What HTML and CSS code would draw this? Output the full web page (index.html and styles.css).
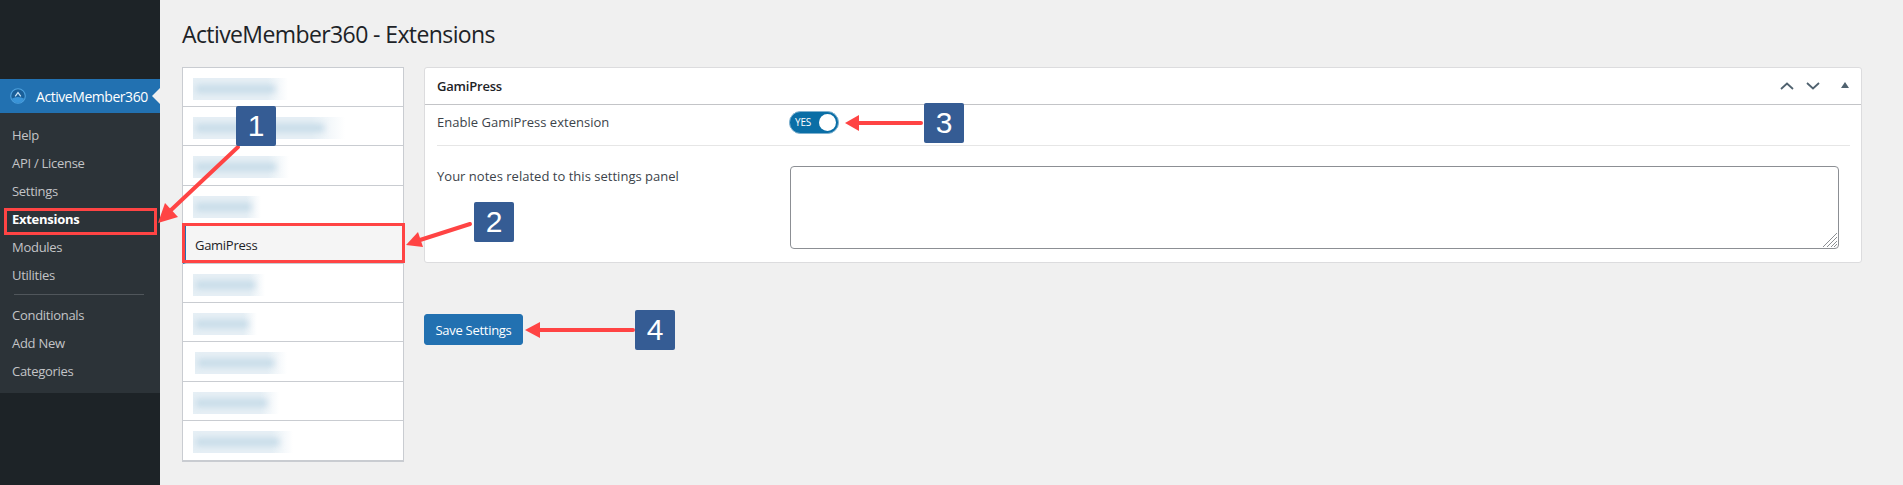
FILE: index.html
```html
<!DOCTYPE html>
<html lang="en">
<head>
<meta charset="utf-8">
<title>ActiveMember360 - Extensions</title>
<link rel="stylesheet" href="styles.css">
</head>
<body>
<div class="page">
  <aside class="sidebar">
    <div class="menu-head">
      <svg class="menu-icon" viewBox="0 0 16 16" aria-hidden="true">
        <circle cx="8" cy="8" r="7.3" fill="#1a5f99" stroke="#4fa3e0" stroke-width="1.1"/>
        <path d="M1.6 10.8 Q8 7 14.4 10.8 Q12 15 8 15 Q4 15 1.6 10.8Z" fill="#3a94d8"/>
        <path d="M5.2 8.4 L8 4.6 L10.8 8.4" fill="none" stroke="#cfe6f8" stroke-width="1.2"/>
      </svg>
      <span>ActiveMember360</span>
    </div>
    <nav class="submenu">
      <a>Help</a>
      <a>API / License</a>
      <a>Settings</a>
      <a class="current">Extensions</a>
      <a>Modules</a>
      <a>Utilities</a>
      <hr class="menu-sep">
      <a>Conditionals</a>
      <a>Add New</a>
      <a>Categories</a>
    </nav>
  </aside>
  <main class="content">
    <h1 class="title">ActiveMember360 - Extensions</h1>
    <div class="columns">
      <ul class="tabs">
        <li><i class="smudge w95"></i></li>
        <li><i class="smudge w152"></i></li>
        <li><i class="smudge w96"></i></li>
        <li><i class="smudge w68"></i></li>
        <li class="active"><span class="tab-label">GamiPress</span></li>
        <li><i class="smudge w72"></i></li>
        <li><i class="smudge w64"></i></li>
        <li><i class="smudge w92 off2"></i></li>
        <li><i class="smudge w86"></i></li>
        <li class="last"><i class="smudge w100"></i></li>
      </ul>
      <div class="right">
        <section class="panel">
          <header class="panel-head">
            <h2>GamiPress</h2>
            <div class="panel-tools">
              <svg class="chev" viewBox="0 0 14 8" aria-hidden="true"><path d="M1 7 L7 1.5 L13 7"/></svg>
              <svg class="chev" viewBox="0 0 14 8" aria-hidden="true"><path d="M1 1 L7 6.5 L13 1"/></svg>
              <svg class="tri" viewBox="0 0 8 6" aria-hidden="true"><path d="M4 0 L8 6 L0 6Z"/></svg>
            </div>
          </header>
          <div class="panel-body">
            <div class="row row-toggle">
              <label>Enable GamiPress extension</label>
              <div class="toggle"><span>YES</span><b></b></div>
            </div>
            <div class="row row-notes">
              <label>Your notes related to this settings panel</label>
              <div class="notes-wrap">
                <textarea class="notes"></textarea>
                <svg class="grip" viewBox="0 0 14 14" aria-hidden="true">
                  <path d="M0 14 L14 0 M4 14 L14 4 M8 14 L14 8 M11 14 L14 11"/>
                </svg>
              </div>
            </div>
          </div>
        </section>
        <button class="save" type="button">Save Settings</button>
      </div>
    </div>
  </main>
</div>

<div class="frame frame-ext"></div>
<div class="frame frame-tab"></div>
<svg class="arrows" viewBox="0 0 1903 485" aria-hidden="true">
  <g stroke="#ff4444" stroke-width="4" stroke-linecap="round" fill="none">
    <path d="M238 147 L170 211"/>
    <path d="M470 224 L420 240"/>
    <path d="M921 123 L858 123"/>
    <path d="M633 330 L537 330"/>
  </g>
  <g fill="#ff4444">
    <path d="M158 223 L165 203 L178 217Z"/>
    <path d="M406 245 L418 232 L423 247Z"/>
    <path d="M845 123 L859 115 L859 131Z"/>
    <path d="M525 330 L540 322 L540 338Z"/>
  </g>
</svg>
<div class="badge b1">1</div>
<div class="badge b2">2</div>
<div class="badge b3">3</div>
<div class="badge b4">4</div>
</body>
</html>
```

FILE: styles.css
```css
* { box-sizing: border-box; }
html, body { margin: 0; height: 485px; overflow: hidden; }
body {
  background: #f0f0f0;
  color: #3c434a;
  font-family: "Open Sans", "Noto Sans", sans-serif;
  font-size: 13px;
  letter-spacing: -0.28px;
  position: relative;
}
.page { display: flex; height: 485px; }

.sidebar {
  width: 160px;
  flex: none;
  background: #1d2327;
  padding-top: 79px;
}
.menu-head {
  height: 34px;
  background: #2271b1;
  color: #fff;
  display: flex;
  align-items: center;
  gap: 10px;
  padding-left: 10px;
  font-size: 14px;
  letter-spacing: -0.45px;
  position: relative;
}
.menu-head::after {
  content: "";
  position: absolute;
  right: 0;
  top: 9px;
  border: 8px solid transparent;
  border-right-color: #f0f0f0;
  border-left-width: 0;
}
.menu-icon { width: 16px; height: 16px; flex: none; }
.submenu {
  background: #2c3338;
  height: 280px;
  padding-top: 7.6px;
  display: flex;
  flex-direction: column;
}
.submenu a {
  display: block;
  height: 28.1px;
  line-height: 28px;
  padding-left: 12px;
  color: #c3c4c7;
}
.submenu a.current { color: #fff; font-weight: 700; }
.menu-sep {
  border: 0;
  height: 1px;
  background: #50565b;
  margin: 5px 16px 5.4px 14px;
  width: 130px;
  flex: none;
}

.content { flex: 1; padding: 0 41px 0 22px; min-width: 0; }
.title {
  margin: 0;
  height: 67px;
  padding-top: 17px;
  font-size: 23px;
  line-height: 34px;
  font-weight: 400;
  color: #1d2327;
  letter-spacing: -0.6px;
}
.columns { display: flex; gap: 20px; align-items: flex-start; }

.tabs {
  list-style: none;
  margin: 0;
  padding: 0;
  width: 222px;
  flex: none;
  background: #fff;
  border: 1px solid #c9ccd1;
  border-bottom-width: 2px;
}
.tabs li {
  height: 39.2px;
  border-bottom: 1px solid #c9ccd1;
  display: flex;
  align-items: center;
  padding-left: 10px;
  color: #1d2327;
}
.tabs li.last { border-bottom: 0; }
.tabs li.active {
  background: #f5f5f5;
  border-left: 3px solid #2271b1;
  padding-left: 9px;
}
.tab-label { padding-top: 2px; }
.smudge {
  display: block;
  position: relative;
  height: 22px;
  margin-top: 4px;
  background: linear-gradient(90deg, #e6eff5 0%, #e6eff5 78%, rgba(230, 239, 245, 0) 100%);
  overflow: hidden;
}
.smudge::before {
  content: "";
  position: absolute;
  left: 3px;
  right: 14%;
  top: 7px;
  height: 8px;
  background: #c6dbe8;
  filter: blur(3px);
}
.off2 { margin-left: 2px; }
.w95 { width: 95px; }
.w152 { width: 152px; }
.w96 { width: 96px; }
.w68 { width: 68px; }
.w72 { width: 72px; }
.w64 { width: 64px; }
.w92 { width: 92px; }
.w86 { width: 86px; }
.w100 { width: 100px; }

.right { flex: 1; min-width: 0; }
.panel {
  background: #fff;
  border: 1px solid #dcdcde;
  border-radius: 3px;
  height: 196px;
}
.panel-head {
  height: 37px;
  border-bottom: 1px solid #c3c4c7;
  display: flex;
  align-items: center;
  justify-content: space-between;
  padding: 0 12px 1px 12px;
}
.panel-head h2 {
  margin: 0;
  font-size: 13px;
  font-weight: 600;
  color: #1d2327;
  letter-spacing: -0.2px;
}
.panel-tools { display: flex; align-items: center; }
.chev { width: 14px; height: 8px; margin-right: 12px; }
.chev path { fill: none; stroke: #50626f; stroke-width: 1.8; }
.tri { width: 8px; height: 6px; margin-left: 9px; margin-top: -1px; }
.tri path { fill: #50626f; }

.panel-body { padding: 0 11px 0 12px; }
.row { display: flex; letter-spacing: 0.02px; }
.row label { width: 353px; flex: none; }
.row-toggle {
  height: 41px;
  padding-bottom: 6px;
  border-bottom: 1px solid #e6e6e6;
  align-items: center;
}
.toggle {
  width: 50px;
  height: 23px;
  border-radius: 12px;
  background: #0a6ea6;
  border: 1px solid #7fb1cf;
  color: #fff;
  display: flex;
  align-items: center;
  justify-content: space-between;
  padding: 0 2px 0 5px;
  font-size: 10px;
  letter-spacing: -0.2px;
  margin-left: -1px;
}
.toggle b {
  width: 17px;
  height: 17px;
  border-radius: 50%;
  background: #fff;
}
.row-notes { padding: 20px 11px 0 0; }
.row-notes label { line-height: 18px; padding-top: 1px; }
.notes-wrap { flex: 1; position: relative; }
.notes {
  width: 100%;
  height: 83px;
  border: 1px solid #8c8f94;
  border-radius: 4px;
  background: #fff;
  display: block;
  resize: none;
}
.grip {
  position: absolute;
  right: 2px;
  bottom: 2px;
  width: 14px;
  height: 14px;
}
.grip path { stroke: #8c8f94; stroke-width: 1; fill: none; }

.save {
  display: block;
  margin: 51px 0 0;
  width: 99px;
  height: 31px;
  background: #2271b1;
  border: 1px solid #2271b1;
  border-radius: 3px;
  color: #fff;
  font: inherit;
  letter-spacing: -0.28px;
}

.frame {
  position: absolute;
  border: 3px solid #ff4444;
}
.frame-ext { left: 4px; top: 208px; width: 153px; height: 27px; }
.frame-tab { left: 182px; top: 223px; width: 223px; height: 40px; }
.arrows { position: absolute; left: 0; top: 0; width: 1903px; height: 485px; }
.badge {
  position: absolute;
  background: #355c94;
  border-radius: 2px;
  color: #fff;
  font-family: "Liberation Sans", Arial, sans-serif;
  font-size: 30px;
  letter-spacing: 0;
  display: flex;
  align-items: center;
  justify-content: center;
  width: 40px;
  height: 40px;
}
.b1 { left: 236px; top: 106px; }
.b2 { left: 474px; top: 202px; }
.b3 { left: 924px; top: 103px; }
.b4 { left: 635px; top: 310px; }
```
